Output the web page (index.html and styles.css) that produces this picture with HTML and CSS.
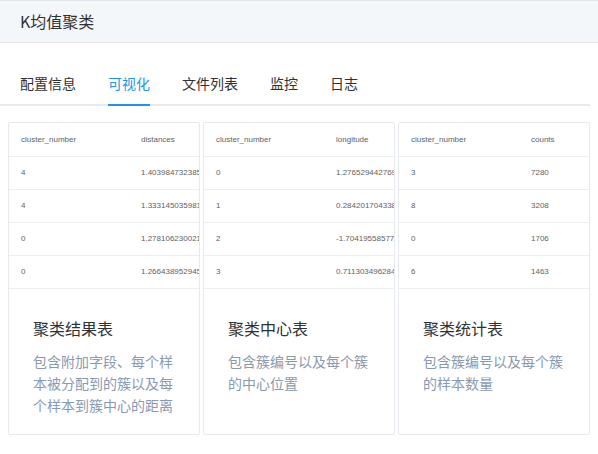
FILE: index.html
```html
<!DOCTYPE html>
<html lang="zh">
<head>
<meta charset="utf-8">
<title>K均值聚类</title>
<link rel="stylesheet" href="styles.css">
</head>
<body>
<header class="page-header">K均值聚类</header>
<nav class="tabs">
  <span class="tab">配置信息</span>
  <span class="tab active">可视化</span>
  <span class="tab">文件列表</span>
  <span class="tab">监控</span>
  <span class="tab">日志</span>
</nav>
<section class="cards">
  <div class="card">
    <table class="data">
      <colgroup><col class="col-key"><col class="col-val"></colgroup>
      <tr><th>cluster_number</th><th>distances</th></tr>
      <tr><td>4</td><td><span class="clip">1.40398473238567</span></td></tr>
      <tr><td>4</td><td><span class="clip">1.33314503598133</span></td></tr>
      <tr><td>0</td><td><span class="clip">1.27810623002188</span></td></tr>
      <tr><td>0</td><td><span class="clip">1.26643895294531</span></td></tr>
    </table>
    <div class="card-body">
      <div class="card-title">聚类结果表</div>
      <div class="card-desc">包含附加字段、每个样本被分配到的簇以及每个样本到簇中心的距离</div>
    </div>
  </div>
  <div class="card">
    <table class="data">
      <colgroup><col class="col-key"><col class="col-val"></colgroup>
      <tr><th>cluster_number</th><th>longitude</th></tr>
      <tr><td>0</td><td><span class="clip">1.27652944276933</span></td></tr>
      <tr><td>1</td><td><span class="clip">0.28420170433855</span></td></tr>
      <tr><td>2</td><td><span class="clip">-1.7041955857772</span></td></tr>
      <tr><td>3</td><td><span class="clip">0.71130349628433</span></td></tr>
    </table>
    <div class="card-body">
      <div class="card-title">聚类中心表</div>
      <div class="card-desc">包含簇编号以及每个簇的中心位置</div>
    </div>
  </div>
  <div class="card">
    <table class="data">
      <colgroup><col class="col-key"><col class="col-val"></colgroup>
      <tr><th>cluster_number</th><th>counts</th></tr>
      <tr><td>3</td><td>7280</td></tr>
      <tr><td>8</td><td>3208</td></tr>
      <tr><td>0</td><td>1706</td></tr>
      <tr><td>6</td><td>1463</td></tr>
    </table>
    <div class="card-body">
      <div class="card-title">聚类统计表</div>
      <div class="card-desc">包含簇编号以及每个簇的样本数量</div>
    </div>
  </div>
</section>
</body>
</html>
```

FILE: styles.css
```css
* { box-sizing: border-box; }
html, body { margin: 0; padding: 0; background: #fff; }
body {
  font-family: "Noto Sans CJK SC", "Noto Sans", sans-serif;
  color: #303133;
  width: 598px;
}
.page-header {
  height: 43px;
  background: #f4f7fa;
  border-top: 1px solid #e4e8ee;
  border-bottom: 1px solid #e4e8ee;
  padding-left: 20px;
  font-size: 16px;
  line-height: 40px;
  color: #303133;
}
.tabs {
  width: 590px;
  margin-top: 30px;
  padding-left: 20px;
  display: flex;
  gap: 32px;
  border-bottom: 2px solid #e6e9ee;
}
.tab {
  font-size: 14px;
  line-height: 20px;
  padding-bottom: 11px;
  margin-bottom: -2px;
  border-bottom: 2px solid transparent;
  color: #303133;
}
.tab.active {
  color: #1f93ec;
  border-bottom-color: #1f93ec;
}
.cards {
  margin: 16px 0 0 8px;
  width: 582px;
  display: flex;
  gap: 3px;
  align-items: stretch;
}
.card {
  width: 192px;
  flex: 0 0 192px;
  border: 1px solid #e6e9ee;
  border-radius: 2px;
  overflow: hidden;
  display: flex;
  flex-direction: column;
}
.data {
  border-collapse: collapse;
  table-layout: fixed;
  width: 190px;
  font-family: "Liberation Sans", Arial, sans-serif;
  font-size: 8px;
  color: #606266;
}
.col-key { width: 120px; }
.col-val { width: 70px; }
.data th, .data td {
  height: 33px;
  padding: 0 0 0 12px;
  text-align: left;
  font-weight: normal;
  white-space: nowrap;
  overflow: hidden;
  border-bottom: 1px solid #ebeef3;
  vertical-align: middle;
}
.clip {
  display: block;
  width: 58px;
  overflow: hidden;
}
.card-body {
  padding: 27px 24px 18px;
  flex: 1;
}
.card-title {
  font-size: 16px;
  line-height: 24px;
  color: #303133;
}
.card-desc {
  margin-top: 10px;
  font-size: 14px;
  line-height: 22px;
  color: #8a99b0;
}
```
